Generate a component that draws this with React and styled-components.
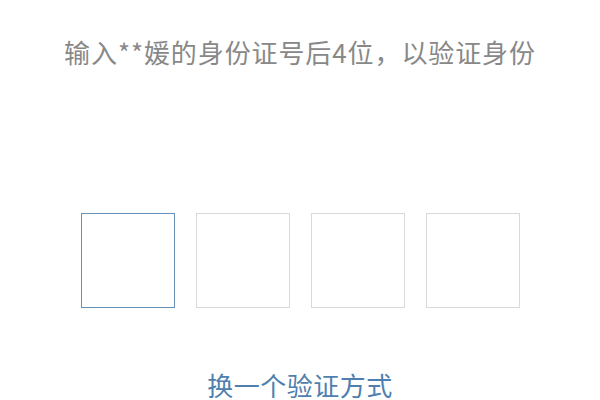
import React from "react";
import styled, { createGlobalStyle } from "styled-components";

const Global = createGlobalStyle`
  html, body { margin: 0; padding: 0; background: #ffffff; }
  body { font-family: "Noto Sans CJK SC", "Noto Sans", sans-serif; }
`;

const Page = styled.div`
  width: 600px;
  height: 400px;
  overflow: hidden;
  display: flex;
  flex-direction: column;
  align-items: center;
  background: #fff;
`;

const Hint = styled.div`
  margin-top: 32px;
  font-size: 26px;
  line-height: 39px;
  color: #888888;
  letter-spacing: 0.9px;
  white-space: nowrap;
`;

const CodeRow = styled.div`
  margin-top: 142px;
  display: flex;
  gap: 21px;
`;

const CodeBox = styled.div`
  width: 94px;
  height: 95px;
  box-sizing: border-box;
  border: 1.5px solid ${(p) => (p.$active ? "#6a91b8" : "#d9d9d9")};
  background: #fff;
`;

const SwitchLink = styled.a`
  margin-top: 64px;
  font-size: 26px;
  line-height: 26px;
  color: #4f7fae;
  text-decoration: none;
  letter-spacing: 0.5px;
`;

export default function App() {
  return (
    <>
      <Global />
      <Page>
        <Hint>输入**媛的身份证号后4位，以验证身份</Hint>
        <CodeRow>
          {[0, 1, 2, 3].map((i) => (
            <CodeBox key={i} $active={i === 0} />
          ))}
        </CodeRow>
        <SwitchLink>换一个验证方式</SwitchLink>
      </Page>
    </>
  );
}
